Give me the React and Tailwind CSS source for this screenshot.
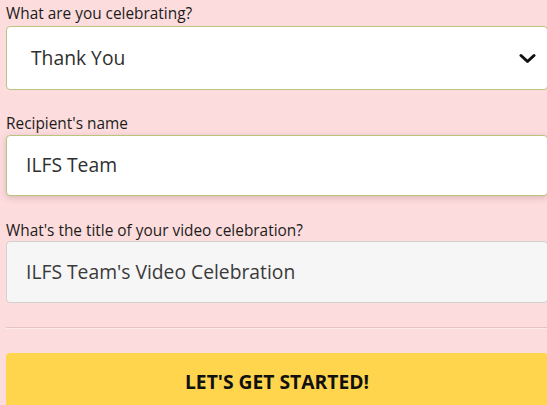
import { useState } from "react";

const font = { fontFamily: '"Open Sans", "Liberation Sans", sans-serif' };

const Chevron = () => (
  <svg width="17" height="11" viewBox="0 0 17 11" fill="none">
    <path d="M2 2.5 L8.5 8.5 L15 2.5" stroke="#111" strokeWidth="3" strokeLinecap="round" strokeLinejoin="round" />
  </svg>
);

export default function App() {
  const [occasion] = useState("Thank You");
  const [name] = useState("ILFS Team");

  return (
    <div className="w-full h-[405px] overflow-hidden bg-[#fddcdd]" style={font}>
      <div className="w-[542px] ml-[6px] flex flex-col">
        {/* occasion */}
        <label className="mt-[3px] mb-[2px] text-[15.4px] leading-[21px] text-[#1c1c1c]">
          What are you celebrating?
        </label>
        <div className="h-[64px] rounded-[4px] border border-[#b9c47f] bg-white flex items-center justify-between pl-[24px] pr-[11px]">
          <span className="text-[19.3px] text-[#2f2f2f]">{occasion}</span>
          <Chevron />
        </div>

        {/* recipient */}
        <label className="mt-[23px] mb-[1px] text-[15.4px] leading-[21px] text-[#1c1c1c]">
          Recipient's name
        </label>
        <div className="h-[61px] rounded-[4px] border border-[#b9c47f] bg-white flex items-center pl-[19px] shadow-[0_2px_6px_rgba(120,80,80,0.25)]">
          <span className="text-[19.3px] text-[#2f2f2f]">{name}</span>
        </div>

        {/* title */}
        <label className="mt-[24px] text-[15.4px] leading-[21px] text-[#1c1c1c]">
          What's the title of your video celebration?
        </label>
        <div className="h-[62px] rounded-[4px] border border-[#d2d2d2] bg-[#f6f6f6] flex items-center pl-[19px]">
          <span className="text-[19.3px] text-[#3a3a3a]">{name}'s Video Celebration</span>
        </div>

        <div className="mt-[24px] h-0 border-t border-t-[#e8c3c5] border-b border-b-[#ffeaea]" />

        <button className="mt-[24px] h-[58px] rounded-[4px] bg-[#ffd54d] flex items-center justify-center text-[19.3px] font-bold text-[#111]">
          LET'S GET STARTED!
        </button>
      </div>
    </div>
  );
}
